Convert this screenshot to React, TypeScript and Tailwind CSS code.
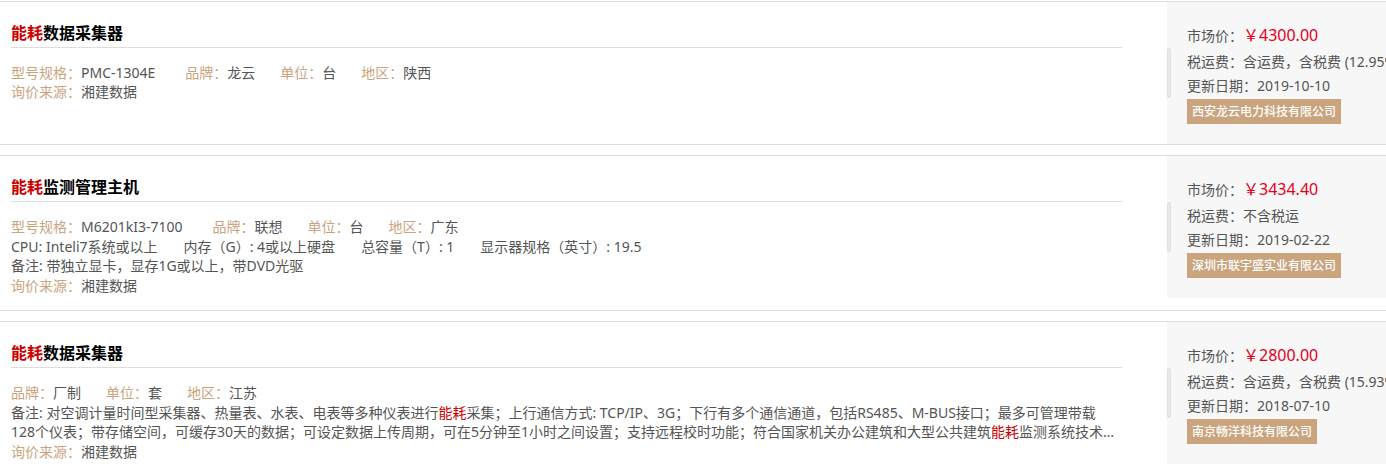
import React from "react";

const HL = ({ children }: { children: React.ReactNode }) => (
  <span className="text-[#cc0000]">{children}</span>
);

const Field = ({ label, value, wide }: { label: string; value: string; wide?: boolean }) => (
  <span className={wide ? "mr-[30px]" : "mr-[25px]"}>
    <span className="text-[#c9a47f]">{label}：</span>
    <span className="text-[#555]">{value}</span>
  </span>
);

type Item = {
  title: string;
  lines: React.ReactNode[];
  price: string;
  tax: string;
  date: string;
  company: string;
};

const items: Item[] = [
  {
    title: "数据采集器",
    lines: [
      <div key="a">
        <Field label="型号规格" value="PMC-1304E" wide />
        <Field label="品牌" value="龙云" />
        <Field label="单位" value="台" />
        <Field label="地区" value="陕西" />
      </div>,
      <div key="b" className="-mt-[1px]">
        <Field label="询价来源" value="湘建数据" />
      </div>,
    ],
    price: "￥4300.00",
    tax: "含运费，含税费 (12.95%)",
    date: "2019-10-10",
    company: "西安龙云电力科技有限公司",
  },
  {
    title: "监测管理主机",
    lines: [
      <div key="a">
        <Field label="型号规格" value="M6201kI3-7100" wide />
        <Field label="品牌" value="联想" />
        <Field label="单位" value="台" />
        <Field label="地区" value="广东" />
      </div>,
      <div key="b" className="text-[#555]">
        <span className="mr-[26px]">CPU: Inteli7系统或以上</span>
        <span className="mr-[26px]">内存（G）: 4或以上硬盘</span>
        <span className="mr-[26px]">总容量（T）: 1</span>
        <span className="mr-[26px]">显示器规格（英寸）: 19.5</span>
      </div>,
      <div key="c" className="text-[#555]">备注: 带独立显卡，显存1G或以上，带DVD光驱</div>,
      <div key="d">
        <Field label="询价来源" value="湘建数据" />
      </div>,
    ],
    price: "￥3434.40",
    tax: "不含税运",
    date: "2019-02-22",
    company: "深圳市联宇盛实业有限公司",
  },
  {
    title: "数据采集器",
    lines: [
      <div key="a">
        <Field label="品牌" value="厂制" />
        <Field label="单位" value="套" />
        <Field label="地区" value="江苏" />
      </div>,
      <div key="b" className="text-[#555] line-clamp-2 pr-[5px]">
        备注: 对空调计量时间型采集器、热量表、水表、电表等多种仪表进行<HL>能耗</HL>采集；上行通信方式: TCP/IP、3G；下行有多个通信通道，包括RS485、M-BUS接口；最多可管理带载128个仪表；带存储空间，可缓存30天的数据；可设定数据上传周期，可在5分钟至1小时之间设置；支持远程校时功能；符合国家机关办公建筑和大型公共建筑<HL>能耗</HL>监测系统技术导则要求，支持多种通信协议，适用于各类建筑<HL>能耗</HL>监测系统。
      </div>,
      <div key="c">
        <Field label="询价来源" value="湘建数据" />
      </div>,
    ],
    price: "￥2800.00",
    tax: "含运费，含税费 (15.93%)",
    date: "2018-07-10",
    company: "南京畅洋科技有限公司",
  },
];

export default function App() {
  return (
    <div className="w-full overflow-hidden bg-white pt-px font-['Noto_Sans','Noto_Sans_CJK_SC',sans-serif]">
      {items.map((it, i) => (
        <div key={i} className="flex w-[1500px] border-y border-[#dddddd] mb-[10px]">
          <div className="w-[1167px] shrink-0 pl-[11px] pr-[45px] pb-[15px]">
            <div className="pt-[19px] pb-[2px] leading-[24px] text-[16px] font-bold text-black border-b border-[#dddddd]">
              <HL>能耗</HL>
              {it.title}
            </div>
            <div className="mt-[15px] text-[14px] leading-[19.5px]">{it.lines}</div>
          </div>
          <div className="w-[300px] shrink-0 self-start h-[142px] bg-[#f7f7f7] flex">
            <div className="w-[4px] h-[50px] mt-[46px] shrink-0 rounded-[2px] bg-[#e8e8e8] border border-[#e0e0e0]" />
            <div className="pl-[16px] pt-[20px] text-[14px] text-[#555] whitespace-nowrap">
              <div className="leading-[26px]">
                市场价：<span className="text-[16px] text-[#e3001b]">{it.price}</span>
              </div>
              <div className="leading-[25px]">税运费：{it.tax}</div>
              <div className="leading-[24px]">更新日期：{it.date}</div>
              <div className="inline-block mt-[1px] h-[25px] leading-[25px] px-[5px] bg-[#c9a47d] text-white text-[12px] font-medium">
                {it.company}
              </div>
            </div>
          </div>
        </div>
      ))}
    </div>
  );
}
